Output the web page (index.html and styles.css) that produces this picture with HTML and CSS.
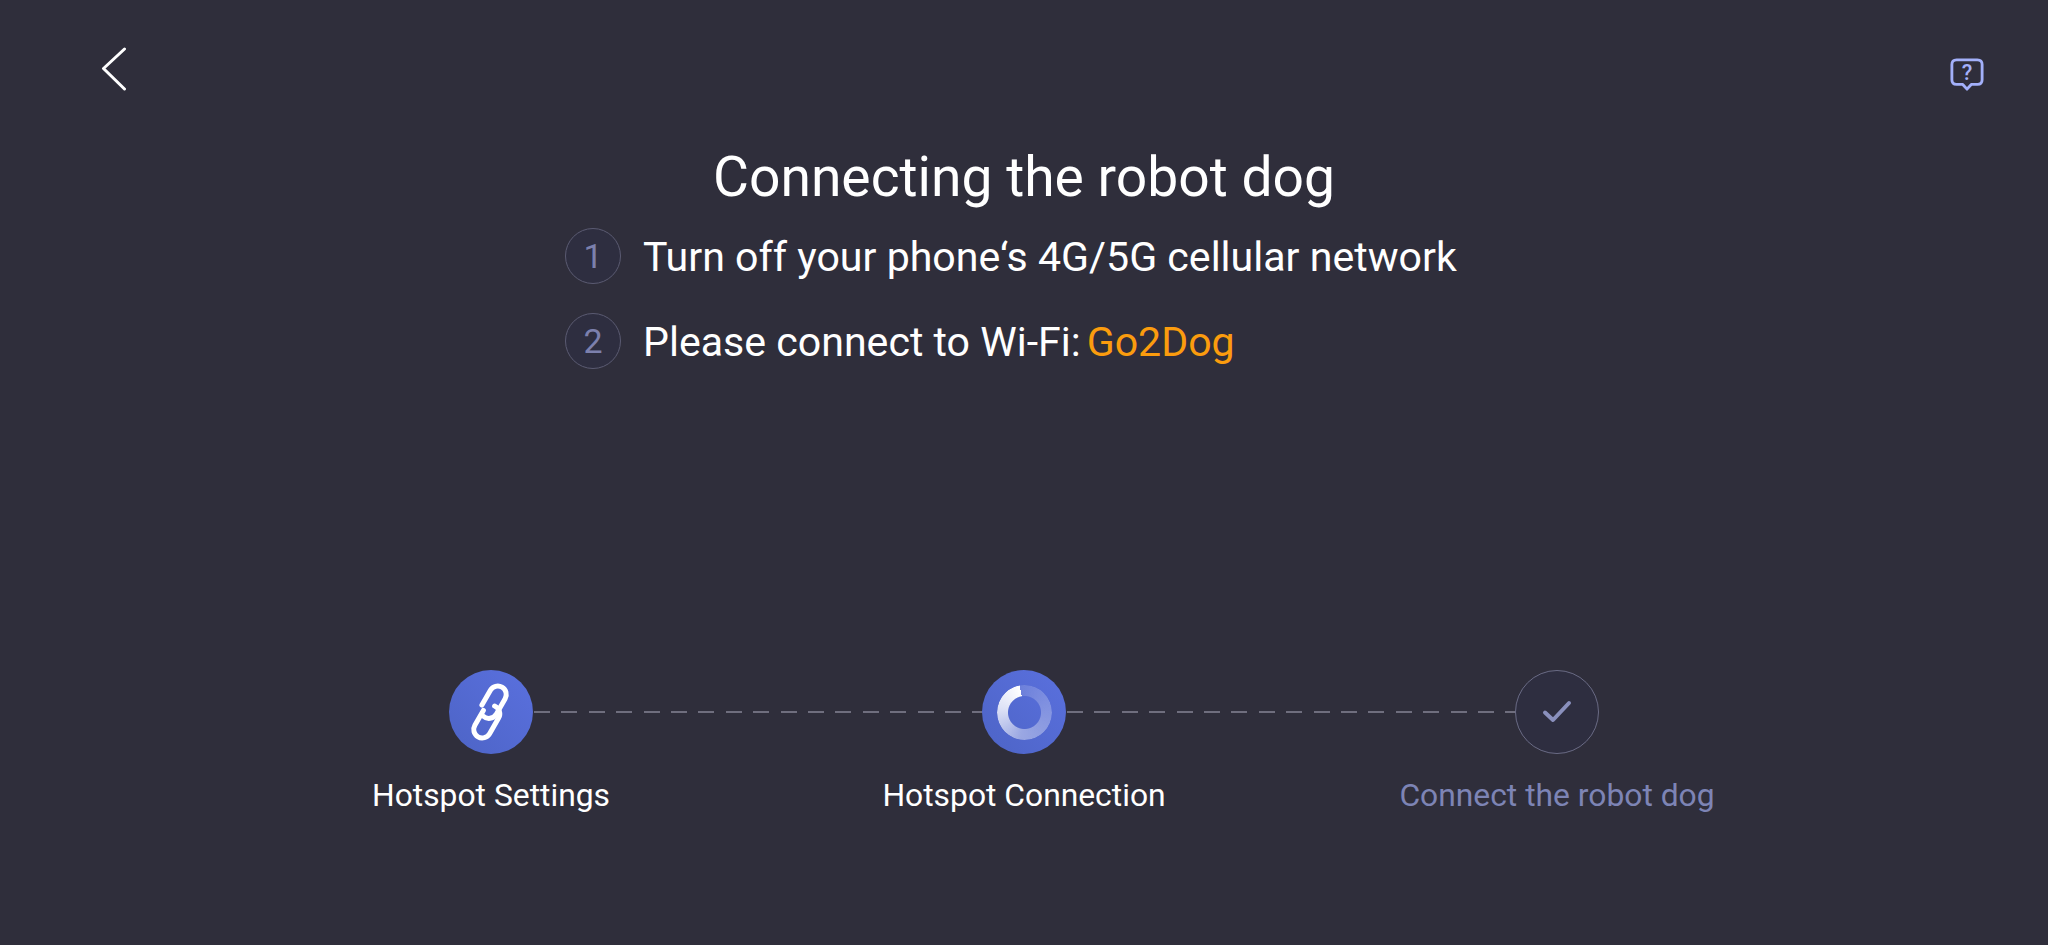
FILE: index.html
```html
<!DOCTYPE html>
<html lang="en">

<head>
    <meta charset="UTF-8">
    <meta name="viewport" content="width=device-width, initial-scale=1.0">
    <title>Connecting the robot dog</title>
    <link rel="stylesheet" href="styles.css">
</head>

<body>
    <div class="page">
        <header class="topbar">
            <button class="icon-button" aria-label="Back">
                <svg width="28" height="44" viewBox="0 0 28 44" fill="none">
                    <path d="M24.500 2 L3.500 21.500 L24.500 42" stroke="#fff" stroke-width="3" stroke-linecap="round" stroke-linejoin="round" />
                </svg>
            </button>
            <button class="icon-button help" aria-label="Help">
                <svg width="34" height="34" viewBox="0 0 36 36" fill="none">
                    <path d="M7 2 H29 Q34 2 34 7 V23 Q34 28 29 28 H22.500 L18 33 L13.500 28 H7 Q2 28 2 23 V7 Q2 2 7 2 Z" stroke="#a3b0fa" stroke-width="3" stroke-linejoin="round" />
                    <text x="18" y="23" class="help-mark">?</text>
                </svg>
            </button>
        </header>

        <main class="intro">
            <h1 class="title">Connecting the robot dog</h1>
            <ol class="instructions">
                <li class="instruction"><span class="badge">1</span>Turn off your phone‘s 4G/5G cellular network</li>
                <li class="instruction"><span class="badge">2</span>Please connect to Wi-Fi:<span class="wifi-name">Go2Dog</span></li>
            </ol>
        </main>

        <section class="steps">
            <div class="step">
                <div class="step-icon active">
                    <svg width="84" height="84" viewBox="0 0 84 84" fill="none">
                        <g stroke="#fff" stroke-width="5" stroke-linecap="round" transform="rotate(30 41 42)">
                            <path d="M30.500 40 V23 A8.500 8.500 0 0 1 47.500 23 V41 A8.500 8.500 0 0 1 37 49" />
                            <path d="M34.500 44 V61 A8.500 8.500 0 0 0 51.500 61 V43 A8.500 8.500 0 0 0 42 34.500" />
                        </g>
                    </svg>
                </div>
                <div class="step-label">Hotspot Settings</div>
            </div>
            <div class="step">
                <div class="step-icon active">
                    <div class="spinner"></div>
                </div>
                <div class="step-label">Hotspot Connection</div>
            </div>
            <div class="step">
                <div class="step-icon pending">
                    <svg width="30" height="24" viewBox="0 0 30 24" fill="none">
                        <path d="M3 12.500 L11 20 L27 3" stroke="#8a90bd" stroke-width="4" stroke-linecap="round" stroke-linejoin="round" />
                    </svg>
                </div>
                <div class="step-label muted">Connect the robot dog</div>
            </div>
        </section>
    </div>
</body>

</html>
```

FILE: styles.css
```css
body {
    margin: 0;
    background: #2f2e3b;
    color: #fff;
    font-family: 'Roboto', sans-serif;
}

.page {
    height: 945px;
    overflow: hidden;
    display: flex;
    flex-direction: column;
}

/* Top bar */
.topbar {
    display: flex;
    justify-content: space-between;
    align-items: flex-start;
    height: 48px;
    padding: 47px 64px 0 100px;
}

.icon-button {
    display: flex;
    padding: 0;
    background: none;
    border: none;
}

.icon-button.help {
    margin-top: 11px;
}

.help-mark {
    fill: #a3b0fa;
    font-family: 'Roboto', sans-serif;
    font-size: 23px;
    font-weight: 500;
    text-anchor: middle;
}

/* Title and instructions */
.intro {
    display: flex;
    flex-direction: column;
    align-items: center;
    margin-top: 46px;
}

.title {
    margin: 0;
    font-size: 55.200px;
    font-weight: 400;
    line-height: 72px;
}

.instructions {
    align-self: flex-start;
    margin: 0 0 0 565px;
    padding: 0;
    list-style: none;
}

.instruction {
    display: flex;
    align-items: center;
    box-sizing: border-box;
    height: 85px;
    padding-top: 3px;
    font-size: 41.100px;
}

.badge {
    display: flex;
    justify-content: center;
    align-items: center;
    width: 54px;
    height: 54px;
    margin-right: 22px;
    margin-bottom: 3px;
    border: 1px solid #5b5b72;
    border-radius: 50%;
    background: #2e2e40;
    color: #7c80ad;
    font-size: 34px;
}

.wifi-name {
    margin-left: 6px;
    color: #fb9c0e;
}

/* Progress steps */
.steps {
    display: grid;
    grid-template-columns: repeat(3, 533px);
    justify-content: center;
    margin-top: 287px;
}

.step {
    position: relative;
    display: flex;
    flex-direction: column;
    align-items: center;
}

/* dashed connector starts at this circle's edge and runs behind the next one */
.step:not(:last-child)::after {
    content: "";
    position: absolute;
    top: 41px;
    left: calc(50% + 43px);
    width: 490px;
    height: 2px;
    background: repeating-linear-gradient(90deg, #6f6e7e 0 16px, transparent 16px 27.400px);
}

.step-icon {
    position: relative;
    z-index: 1;
    display: flex;
    justify-content: center;
    align-items: center;
    box-sizing: border-box;
    width: 84px;
    height: 84px;
    border-radius: 50%;
}

.step-icon.active {
    background: linear-gradient(45deg, #4d64c6, #5a70de);
}

.step-icon.pending {
    border: 1px solid #6a6b85;
    background: #2e2e40;
}

.spinner {
    width: 55px;
    height: 55px;
    border-radius: 50%;
    background: conic-gradient(from -10deg, rgba(255, 255, 255, 0.14), rgba(255, 255, 255, 0.42) 55%, rgba(255, 255, 255, 0.8) 80%, #fff 100%);
    -webkit-mask: radial-gradient(circle, transparent 16px, #000 17px);
    mask: radial-gradient(circle, transparent 16px, #000 17px);
}

.step-label {
    margin-top: 21px;
    font-size: 31.800px;
    line-height: 40px;
    white-space: nowrap;
}

.step-label.muted {
    color: #7d84b5;
}
```
